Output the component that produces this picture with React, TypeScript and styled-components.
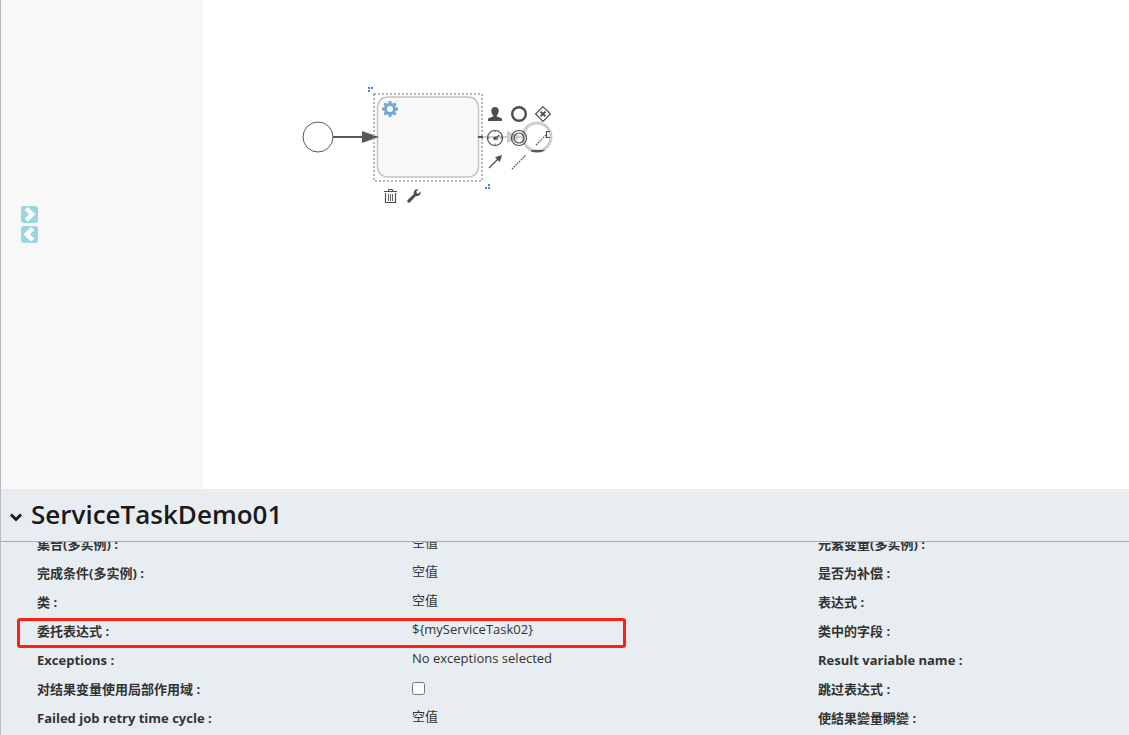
import React from "react";
import styled, { createGlobalStyle } from "styled-components";

const GlobalStyle = createGlobalStyle`
  *, *::before, *::after { box-sizing: border-box; }
  body {
    margin: 0;
    background: #ffffff;
    color: #333333;
    font-family: "Open Sans", "Noto Sans CJK SC", sans-serif;
    font-size: 13px;
    line-height: 20px;
  }
`;

const Page = styled.div`
  display: flex;
  flex-direction: column;
  height: 100vh;
  border-left: 1px solid #b9babf;
`;

const Workspace = styled.main`
  display: flex;
  flex: 1;
  min-height: 0;
`;

const Palette = styled.aside`
  display: flex;
  flex-direction: column;
  align-items: flex-start;
  gap: 3px;
  width: 202px;
  padding: 206px 20px 0;
  background: #f8f8f8;
`;

const PaletteButton = styled.button`
  display: block;
  width: 17px;
  height: 17px;
  padding: 0;
  border: 0;
  border-radius: 3px;
  background: #9bd5e1;

  svg { display: block; }
`;

const Canvas = styled.section`
  position: relative;
  flex: 1;
  overflow: hidden;
`;

const Diagram = styled.svg`
  display: block;
`;

const ContextPad = styled.div<{ $left: number; $top: number; $columns: number }>`
  position: absolute;
  left: ${(p) => p.$left}px;
  top: ${(p) => p.$top}px;
  display: grid;
  grid-template-columns: repeat(${(p) => p.$columns}, 24px);
`;

const PadButton = styled.button`
  display: block;
  width: 24px;
  height: 24px;
  padding: 0;
  border: 0;
  background: rgba(255, 255, 255, 0.7);

  svg { display: block; }
`;

const PropertyPanel = styled.section`
  background: #e8edf1;
`;

const PanelHeader = styled.header`
  display: flex;
  align-items: center;
  gap: 8px;
  height: 53px;
  padding: 0 8px;
  border-bottom: 1px solid #a4acb9;
`;

const CollapseButton = styled.button`
  display: block;
  padding: 4px 0 0;
  border: 0;
  background: none;

  svg { display: block; }
`;

const Title = styled.h1`
  margin: 0;
  padding-bottom: 2px;
  color: #1a1a1a;
  font-size: 26px;
  font-weight: 600;
  line-height: 36px;
`;

const PropertyList = styled.div`
  display: flex;
  flex-direction: column;
  justify-content: flex-end;
  height: 193px;
  padding-bottom: 3px;
  overflow: hidden;
`;

const PropertyRow = styled.div<{ $marked?: boolean }>`
  position: relative;
  display: grid;
  flex: none;
  grid-template-columns: 375fr 406fr 311fr;
  align-items: center;
  height: 29px;
  padding-left: 36px;

  &::after {
    content: ${(p) => (p.$marked ? '""' : "none")};
    position: absolute;
    top: 2px;
    left: 16px;
    width: 54%;
    height: 30px;
    border: 3px solid #ff2013;
    border-radius: 3px;
  }
`;

const PropertyLabel = styled.label`
  font-weight: 700;
`;

const PropertyValue = styled.output`
  padding-bottom: 4px;
`;

const CheckBox = styled.input`
  display: block;
  width: 13px;
  height: 13px;
  margin: 0;
`;

type Property = {
  id: string;
  label: string;
  value?: string;
  other: string;
  marked?: boolean;
};

const properties: Property[] = [
  { id: "collection", label: "集合(多实例) :", value: "空值", other: "元素变量(多实例) :" },
  { id: "completion", label: "完成条件(多实例) :", value: "空值", other: "是否为补偿 :" },
  { id: "class", label: "类 :", value: "空值", other: "表达式 :" },
  { id: "delegate", label: "委托表达式 :", value: "${myServiceTask02}", other: "类中的字段 :", marked: true },
  { id: "exceptions", label: "Exceptions :", value: "No exceptions selected", other: "Result variable name :" },
  { id: "local-scope", label: "对结果变量使用局部作用域 :", other: "跳过表达式 :" },
  { id: "retry", label: "Failed job retry time cycle :", value: "空值", other: "使結果變量瞬變 :" },
];

const Chevron = ({ flip }: { flip?: boolean }) => (
  <svg width="17" height="17" viewBox="0 0 17 17" aria-hidden="true">
    <path
      d={flip ? "M11.8 2.500 5.700 8.300l6.100 5.800" : "M5.200 2.500l6.100 5.800-6.100 5.800"}
      fill="none"
      stroke="#fff"
      strokeWidth="4.400"
    />
  </svg>
);

const Icon = ({ children }: { children: React.ReactNode }) => (
  <svg width="24" height="24" viewBox="0 0 24 24" fill="none" stroke="#4d4d4d" aria-hidden="true">
    {children}
  </svg>
);

const appendEntries = [
  {
    name: "User task",
    icon: (
      <path
        d="M12 5C9.800 5 8.300 6.500 8.300 8.800C8.300 10.600 9 12.300 10.200 13.300V14.600L6 16C5.300 16.300 5 16.800 5 17.500V19H19V17.500C19 16.800 18.700 16.300 18 16L13.800 14.600V13.300C15 12.300 15.700 10.600 15.700 8.800C15.700 6.500 14.200 5 12 5Z"
        fill="#4d4d4d"
        stroke="none"
      />
    ),
  },
  { name: "End event", icon: <circle cx="12" cy="12" r="6.800" strokeWidth="2.400" /> },
  {
    name: "Exclusive gateway",
    icon: (
      <>
        <path d="m12 4.600 7.400 7.400-7.400 7.400L4.600 12Z" strokeWidth="1.200" />
        <path d="m9.600 9.600 4.800 4.800m0-4.800-4.800 4.800" strokeWidth="2" />
      </>
    ),
  },
  {
    name: "Timer event",
    icon: (
      <>
        <circle cx="12" cy="12" r="7.500" strokeWidth="1.200" />
        <path d="m16.200 9.200-4 3m0 0 3 1.200" strokeWidth="1.200" />
        <circle cx="12" cy="12.300" r="1.700" fill="#4d4d4d" stroke="none" />
        <path d="M12 5v1.500M12 17.500V19M5 12h1.500M17.500 12H19" strokeWidth="0.800" />
      </>
    ),
  },
  {
    name: "Intermediate event",
    icon: (
      <>
        <circle cx="12" cy="12" r="7.500" strokeWidth="1.200" />
        <circle cx="12" cy="12" r="5" strokeWidth="1.200" />
      </>
    ),
  },
  {
    name: "Text annotation",
    icon: (
      <>
        <path d="M5 19 16 8" strokeWidth="1.200" strokeDasharray="1.500 1" />
        <path d="M19 5.500h-3.500v6H19" strokeWidth="1.200" />
      </>
    ),
  },
  {
    name: "Sequence flow",
    icon: (
      <>
        <path d="M6 18 15 9" strokeWidth="1.200" />
        <path d="m19 5-2.200 7-4.800-4.800Z" fill="#4d4d4d" stroke="none" />
      </>
    ),
  },
  { name: "Association", icon: <path d="M5 19 19 5" strokeWidth="1.300" strokeDasharray="1.500 1" /> },
];

const editEntries = [
  {
    name: "Delete",
    icon: (
      <>
        <path d="M6 7.500h13M10.500 7V5.500h4V7" />
        <path d="M7.500 9v9.500h10V9" strokeWidth="1.200" />
        <path d="M10.500 10v7M12.500 10v7M14.500 10v7" strokeWidth="0.900" />
      </>
    ),
  },
  {
    name: "Change type",
    icon: (
      <path
        d="M18.600 7.600 15.900 10l-2-1.900 2.500-2.700c-2.300-.8-4.600.6-4.700 3.200 0 .5.100 1 .2 1.400l-6 5.700c-1.700 1.700.7 4.100 2.400 2.400l5.600-6c2.700.8 5.400-1.500 4.700-4.500Z"
        fill="#4d4d4d"
        stroke="none"
      />
    ),
  },
];

const gearTeeth = [0, 45, 90, 135, 180, 225, 270, 315];

const ProcessDiagram = () => (
  <Diagram width="380" height="220" viewBox="203 0 380 220" role="img" aria-label="Process">
    <circle cx="318" cy="137" r="15" fill="#fff" stroke="#585858" />
    <path d="M333 137h30" stroke="#585858" strokeWidth="2" />
    <rect x="377.500" y="97" width="101" height="80" rx="10" fill="#f8f8f8" stroke="#c4c4c4" strokeWidth="1.500" />
    <path d="M362 131v12l17-6Z" fill="#585858" />
    <g fill="#72a7d0">
      {gearTeeth.map((angle) => (
        <path key={angle} d="M388 103.500 388.800 101h2.400l.8 2.500Z" transform={`rotate(${angle} 390 109)`} />
      ))}
    </g>
    <circle cx="390" cy="109" r="4.500" fill="#fff" stroke="#72a7d0" strokeWidth="3" />
    <path d="M478 137h32" stroke="#585858" strokeWidth="2" />
    <path d="M507 131v12l16-6Z" fill="#585858" />
    <circle cx="537" cy="137" r="14" fill="#fff" stroke="#585858" strokeWidth="3" />
    <rect x="374" y="94" width="108" height="87" fill="none" stroke="#b5b5b5" strokeWidth="2" strokeDasharray="2 2" />
    <path d="M368 87h2v2h-2zm3 0h2v2h-2zm-3 3h2v2h-2z" fill="#4f81bd" />
    <path d="M488 184h2v2h-2zm0 3h2v2h-2zm-3 0h2v2h-2z" fill="#4f81bd" />
  </Diagram>
);

export default function App() {
  return (
    <>
      <GlobalStyle />
      <Page>
        <Workspace>
          <Palette>
            <PaletteButton type="button" aria-label="Expand palette">
              <Chevron />
            </PaletteButton>
            <PaletteButton type="button" aria-label="Collapse palette">
              <Chevron flip />
            </PaletteButton>
          </Palette>
          <Canvas>
            <ProcessDiagram />
            <ContextPad $left={280} $top={102} $columns={3}>
              {appendEntries.map((entry) => (
                <PadButton key={entry.name} type="button" aria-label={entry.name}>
                  <Icon>{entry.icon}</Icon>
                </PadButton>
              ))}
            </ContextPad>
            <ContextPad $left={175} $top={184} $columns={2}>
              {editEntries.map((entry) => (
                <PadButton key={entry.name} type="button" aria-label={entry.name}>
                  <Icon>{entry.icon}</Icon>
                </PadButton>
              ))}
            </ContextPad>
          </Canvas>
        </Workspace>
        <PropertyPanel>
          <PanelHeader>
            <CollapseButton type="button" aria-label="Collapse properties">
              <svg width="14" height="12" viewBox="0 0 14 12" aria-hidden="true">
                <path d="m2 3.500 5 5 5-5" fill="none" stroke="#1a1a1a" strokeWidth="3" />
              </svg>
            </CollapseButton>
            <Title>ServiceTaskDemo01</Title>
          </PanelHeader>
          <PropertyList>
            {properties.map((property) => (
              <PropertyRow key={property.id} $marked={property.marked}>
                <PropertyLabel htmlFor={property.id}>{property.label}</PropertyLabel>
                {property.value ? (
                  <PropertyValue id={property.id}>{property.value}</PropertyValue>
                ) : (
                  <CheckBox id={property.id} type="checkbox" />
                )}
                <PropertyLabel as="span">{property.other}</PropertyLabel>
              </PropertyRow>
            ))}
          </PropertyList>
        </PropertyPanel>
      </Page>
    </>
  );
}
